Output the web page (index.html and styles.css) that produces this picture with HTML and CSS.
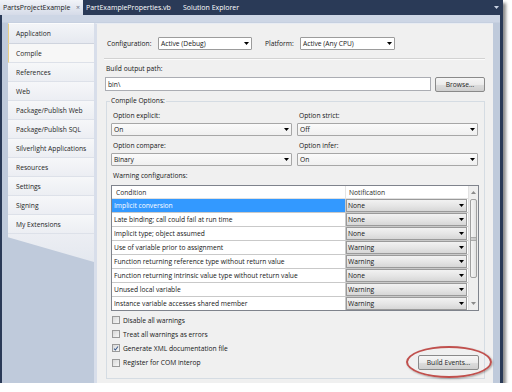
FILE: index.html
```html
<!DOCTYPE html>
<html>
<head>
<meta charset="utf-8">
<link rel="stylesheet" href="styles.css">
</head>
<body>
<div class="window">
  <div class="tabbar">
    <div class="tab active"><span>PartsProjectExample</span><span class="close">×</span></div>
    <div class="tab second">PartExampleProperties.vb</div>
    <div class="tab third">Solution Explorer</div>
    <div class="tab-menu"><svg width="5" height="3" viewBox="0 0 5 3"><polygon points="0,0 5,0 2.5,3" fill="#c9d2e2"/></svg></div>
  </div>
  <div class="frame">
    <div class="nav">
      <div class="nav-item first">Application</div>
      <div class="nav-item selected">Compile</div>
      <div class="nav-item">References</div>
      <div class="nav-item">Web</div>
      <div class="nav-item">Package/Publish Web</div>
      <div class="nav-item">Package/Publish SQL</div>
      <div class="nav-item">Silverlight Applications</div>
      <div class="nav-item">Resources</div>
      <div class="nav-item">Settings</div>
      <div class="nav-item">Signing</div>
      <div class="nav-item">My Extensions</div>
      <div class="nav-tail"></div>
    </div>
    <div class="content">
      <div class="config-row">
        <span class="lbl-config">Configuration:</span>
        <div class="select config-select"><span>Active (Debug)</span><i class="arrow"><svg width="5" height="3" viewBox="0 0 5 3"><polygon points="0,0 5,0 2.5,3" fill="#000"/></svg></i></div>
        <span class="lbl-platform">Platform:</span>
        <div class="select platform-select"><span>Active (Any CPU)</span><i class="arrow"><svg width="5" height="3" viewBox="0 0 5 3"><polygon points="0,0 5,0 2.5,3" fill="#000"/></svg></i></div>
      </div>
      <div class="sep"></div>
      <div class="field-label">Build output path:</div>
      <div class="path-row">
        <div class="input">bin\</div>
        <div class="btn browse">Browse...</div>
      </div>
      <fieldset class="group">
        <legend>Compile Options:</legend>
        <div class="opts">
          <div class="opt">
            <div class="opt-label">Option explicit:</div>
            <div class="select opt-select"><span>On</span><i class="arrow"><svg width="5" height="3" viewBox="0 0 5 3"><polygon points="0,0 5,0 2.5,3" fill="#000"/></svg></i></div>
          </div>
          <div class="opt">
            <div class="opt-label">Option strict:</div>
            <div class="select opt-select"><span>Off</span><i class="arrow"><svg width="5" height="3" viewBox="0 0 5 3"><polygon points="0,0 5,0 2.5,3" fill="#000"/></svg></i></div>
          </div>
          <div class="opt">
            <div class="opt-label">Option compare:</div>
            <div class="select opt-select"><span>Binary</span><i class="arrow"><svg width="5" height="3" viewBox="0 0 5 3"><polygon points="0,0 5,0 2.5,3" fill="#000"/></svg></i></div>
          </div>
          <div class="opt">
            <div class="opt-label">Option infer:</div>
            <div class="select opt-select"><span>On</span><i class="arrow"><svg width="5" height="3" viewBox="0 0 5 3"><polygon points="0,0 5,0 2.5,3" fill="#000"/></svg></i></div>
          </div>
        </div>
        <div class="warn-label">Warning configurations:</div>
        <div class="grid">
          <div class="table">
            <div class="row head"><div class="c1">Condition</div><div class="c2">Notification</div></div>
            <div class="row sel"><div class="c1">Implicit conversion</div><div class="c2"><div class="combo"><span>None</span><i class="carrow"><svg width="5" height="3" viewBox="0 0 5 3"><polygon points="0,0 5,0 2.5,3" fill="#000"/></svg></i></div></div></div>
            <div class="row"><div class="c1">Late binding; call could fail at run time</div><div class="c2"><div class="combo"><span>None</span><i class="carrow"><svg width="5" height="3" viewBox="0 0 5 3"><polygon points="0,0 5,0 2.5,3" fill="#000"/></svg></i></div></div></div>
            <div class="row"><div class="c1">Implicit type; object assumed</div><div class="c2"><div class="combo"><span>None</span><i class="carrow"><svg width="5" height="3" viewBox="0 0 5 3"><polygon points="0,0 5,0 2.5,3" fill="#000"/></svg></i></div></div></div>
            <div class="row"><div class="c1">Use of variable prior to assignment</div><div class="c2"><div class="combo"><span>Warning</span><i class="carrow"><svg width="5" height="3" viewBox="0 0 5 3"><polygon points="0,0 5,0 2.5,3" fill="#000"/></svg></i></div></div></div>
            <div class="row"><div class="c1">Function returning reference type without return value</div><div class="c2"><div class="combo"><span>Warning</span><i class="carrow"><svg width="5" height="3" viewBox="0 0 5 3"><polygon points="0,0 5,0 2.5,3" fill="#000"/></svg></i></div></div></div>
            <div class="row"><div class="c1">Function returning intrinsic value type without return value</div><div class="c2"><div class="combo"><span>None</span><i class="carrow"><svg width="5" height="3" viewBox="0 0 5 3"><polygon points="0,0 5,0 2.5,3" fill="#000"/></svg></i></div></div></div>
            <div class="row"><div class="c1">Unused local variable</div><div class="c2"><div class="combo"><span>Warning</span><i class="carrow"><svg width="5" height="3" viewBox="0 0 5 3"><polygon points="0,0 5,0 2.5,3" fill="#000"/></svg></i></div></div></div>
            <div class="row"><div class="c1">Instance variable accesses shared member</div><div class="c2"><div class="combo"><span>Warning</span><i class="carrow"><svg width="5" height="3" viewBox="0 0 5 3"><polygon points="0,0 5,0 2.5,3" fill="#000"/></svg></i></div></div></div>
          </div>
          <div class="scrollbar">
            <div class="sb-btn"><svg width="5" height="3" viewBox="0 0 5 3"><polygon points="0,3 5,3 2.5,0" fill="#8a8a8a"/></svg></div>
            <div class="sb-thumb"><svg width="5" height="4" viewBox="0 0 5 4"><path d="M0 0.5H5M0 2H5M0 3.5H5" stroke="#9a9a9a" stroke-width="0.8"/></svg></div>
            <div class="sb-track"></div>
            <div class="sb-btn"><svg width="5" height="3" viewBox="0 0 5 3"><polygon points="0,0 5,0 2.5,3" fill="#8a8a8a"/></svg></div>
          </div>
        </div>
        <div class="checks">
          <div class="check"><span class="box"></span><span>Disable all warnings</span></div>
          <div class="check"><span class="box"></span><span>Treat all warnings as errors</span></div>
          <div class="check"><span class="box checked"><svg width="7" height="7" viewBox="0 0 7 7"><path d="M1.2 3.6 L2.8 5.3 L5.8 1.2" fill="none" stroke="#3b5a8c" stroke-width="1.2"/></svg></span><span>Generate XML documentation file</span></div>
          <div class="check last">
            <div class="check-inner"><span class="box"></span><span>Register for COM interop</span></div>
            <div class="btn build">Build Events...</div>
          </div>
        </div>
      </fieldset>
    </div>
  </div>
  <div class="callout"></div>
</div>
</body>
</html>
```
FILE: styles.css
```css
* { box-sizing: border-box; }

body {
  margin: 0;
  background: #ffffff;
  font-family: "Open Sans", "Noto Sans", sans-serif;
  font-size: 6.7px;
  color: #151515;
}

.window {
  position: relative;
  width: 503px;
  height: 383px;
  display: flex;
  flex-direction: column;
  box-shadow: 3px 3px 3px rgba(0, 0, 0, 0.45);
}

/* tab bar */
.tabbar {
  height: 15px;
  background: #2a3a57;
  display: flex;
  color: #ffffff;
  font-size: 7px;
}
.tab {
  display: flex;
  align-items: center;
  padding-left: 3px;
}
.tab.active {
  width: 83px;
  padding-right: 3px;
  justify-content: space-between;
  background: linear-gradient(#f1f3f8, #d5dbe8);
  color: #1b1b1b;
}
.tab .close { color: #6a7080; font-size: 7px; }
.tab.second { width: 97px; }
.tab-menu {
  margin-left: auto;
  width: 9px;
  display: flex;
  align-items: center;
}

/* frame */
.frame {
  flex: 1;
  display: flex;
  background: linear-gradient(#cdd6e5 0, #cdd6e5 7px, #bfcadb 8px);
  border-left: 2px solid #2a3a57;
  border-right: 3px solid #2a3a57;
  padding: 8px 7px 0 6px;
}

.nav {
  width: 87px;
  display: flex;
  flex-direction: column;
}
.nav-item {
  height: 19px;
  display: flex;
  align-items: center;
  padding-left: 8px;
  background: linear-gradient(#f6f7f9, #eceef3);
  border-bottom: 1px solid #dde1e9;
  color: #1e1e1e;
}
.nav-item.first {
  height: 21px;
  background: linear-gradient(#f3f5f8, #e6e9f0);
  border-top: 1px solid #fbfcfd;
  border-left: 1px solid #e9cf86;
  border-bottom: 1px solid #cfd4de;
  padding-left: 7px;
}
.nav-item.selected {
  background: #f7f7f7;
  border-left: 1px solid #e9cf86;
  padding-left: 7px;
}
.nav-tail {
  height: 28px;
  background: linear-gradient(#eceef3, #e4e8ef);
  clip-path: polygon(0 0, 100% 0, 100% 100%, 0 12%);
}

/* content */
.content {
  flex: 1;
  background: #f0f0f0;
  border-left: 3px solid #d8deea;
  border-top: 1px solid #e8ecf3;
  display: flex;
  flex-direction: column;
}

.config-row {
  display: flex;
  align-items: center;
  height: 13px;
  margin-top: 13px;
  padding-left: 10px;
}
.lbl-config { width: 51px; }
.lbl-platform { width: 35px; margin-left: 13px; }

.select {
  height: 13px;
  display: flex;
  align-items: center;
  padding-left: 2px;
  border: 1px solid #9c9c9c;
  background: #ffffff;
  border-radius: 1px;
}
.select .arrow {
  margin-left: auto;
  width: 10px;
  height: 100%;
  display: flex;
  align-items: center;
  justify-content: center;
}
.config-select { width: 94px; }
.platform-select { width: 95px; }

.sep {
  margin: 8px 8px 0 7px;
  border-top: 1px solid #d2d2d2;
  border-bottom: 1px solid #fbfbfb;
}

.field-label {
  margin-top: 4px;
  line-height: 10px;
  padding-left: 9px;
}

.path-row {
  display: flex;
  gap: 4px;
  margin-top: 3px;
  padding: 0 8px;
  height: 14px;
}
.input {
  flex: 1;
  background: #ffffff;
  border: 1px solid #abadb3;
  display: flex;
  align-items: center;
  padding-left: 2px;
}
.btn {
  display: flex;
  align-items: center;
  justify-content: center;
  border: 1px solid #8a8a8a;
  border-radius: 2px;
  background: linear-gradient(#f6f6f6 0%, #ebebeb 50%, #dddddd 51%, #cfcfcf 100%);
  color: #1e1e1e;
}
.browse { width: 50px; height: 15px; }

/* group box */
.group {
  margin: 5px 8px 0 9px;
  padding: 5px 5px 8px 4px;
  border: 1px solid #d5dce3;
  min-width: 0;
}
.group legend {
  padding: 0 1px;
  margin-left: -1px;
  line-height: 10px;
}

.opts {
  display: grid;
  grid-template-columns: 181px 181px;
  column-gap: 5px;
  row-gap: 5px;
}
.opt-label {
  line-height: 10px;
  padding-left: 2px;
  margin-bottom: 2px;
}
.opt-select {
  background: linear-gradient(#fbfbfb, #f0f0f0);
  border-color: #a7a7a7;
}

.warn-label {
  margin-top: 5px;
  line-height: 10px;
  padding-left: 2px;
}

/* grid */
.grid {
  margin-top: 4px;
  width: 368px;
  border: 1px solid #7f838c;
  background: #ffffff;
  display: flex;
}
.table { flex: 1; display: flex; flex-direction: column; }
.row {
  display: flex;
  height: 14px;
  border-bottom: 1px solid #c9c9c9;
}
.row:last-child { border-bottom: none; height: 13px; }
.row.head { height: 13px; border-bottom: 1px solid #e0e0e0; }
.row.head .c1, .row.head .c2 { border-right: none; color: #2a2a2a; }
.c1 {
  width: 234px;
  display: flex;
  align-items: center;
  padding-left: 2px;
  border-right: 1px solid #c9c9c9;
  white-space: nowrap;
  overflow: hidden;
}
.row.head .c1 { padding-left: 4px; border-right: 1px solid #e4e4e4; }
.row.sel .c1 { background: #3399ff; color: #ffffff; }
.c2 {
  flex: 1;
  display: flex;
  align-items: stretch;
  padding: 0 1px 0 0;
}
.row.head .c2 { align-items: center; padding-left: 3px; }
.combo {
  flex: 1;
  display: flex;
  align-items: center;
  padding-left: 1px;
  border: 1px solid #9a9a9a;
  background: linear-gradient(#f2f2f2 0%, #e6e6e6 50%, #d7d7d7 100%);
}
.carrow {
  margin-left: auto;
  width: 10px;
  display: flex;
  justify-content: center;
}

.scrollbar {
  width: 10px;
  background: #eeeeee;
  border-left: 1px solid #e2e2e2;
  display: flex;
  flex-direction: column;
}
.sb-btn {
  height: 13px;
  display: flex;
  align-items: center;
  justify-content: center;
}
.sb-thumb {
  height: 79px;
  margin: 0 1px;
  border: 1px solid #a0a0a0;
  border-radius: 2px;
  background: linear-gradient(90deg, #f6f6f6, #e2e2e2);
  display: flex;
  align-items: center;
  justify-content: center;
}
.sb-track { flex: 1; }

/* checks */
.checks {
  margin-top: 2px;
  display: flex;
  flex-direction: column;
}
.check {
  height: 14px;
  display: flex;
  align-items: center;
  gap: 3px;
  padding-left: 1px;
}
.check.last {
  height: 15px;
  justify-content: space-between;
}
.check-inner {
  display: flex;
  align-items: center;
  gap: 3px;
}
.box {
  width: 8px;
  height: 8px;
  border: 1px solid #9a9a9a;
  background: linear-gradient(135deg, #d8d8d8, #f7f7f7);
  display: flex;
  align-items: center;
  justify-content: center;
}
.build { width: 61px; height: 15px; }

/* annotation ellipse */
.callout {
  position: absolute;
  left: 406px;
  top: 346px;
  width: 86px;
  height: 32px;
  border: 2px solid #c0504d;
  border-radius: 50%;
  box-shadow: 1px 1px 2px rgba(0, 0, 0, 0.3);
}
```
